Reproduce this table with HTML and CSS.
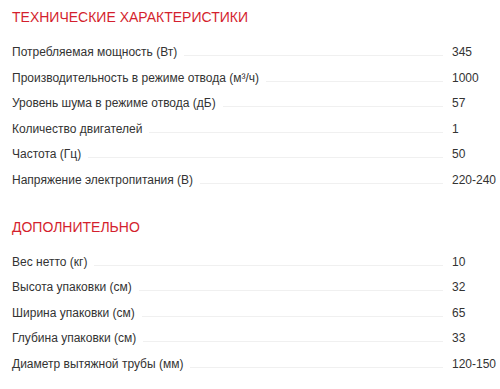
FILE: index.html
```html
<!DOCTYPE html>
<html lang="ru">
<head>
<meta charset="utf-8">
<link rel="stylesheet" href="styles.css">
</head>
<body>
<div class="specs">
  <section class="group">
    <h2 class="group-title">ТЕХНИЧЕСКИЕ ХАРАКТЕРИСТИКИ</h2>
    <div class="row"><span class="label">Потребляемая мощность (Вт)</span><span class="fill"></span><span class="value">345</span></div>
    <div class="row"><span class="label">Производительность в режиме отвода (м³/ч)</span><span class="fill"></span><span class="value">1000</span></div>
    <div class="row"><span class="label">Уровень шума в режиме отвода (дБ)</span><span class="fill"></span><span class="value">57</span></div>
    <div class="row"><span class="label">Количество двигателей</span><span class="fill"></span><span class="value">1</span></div>
    <div class="row"><span class="label">Частота (Гц)</span><span class="fill"></span><span class="value">50</span></div>
    <div class="row"><span class="label">Напряжение электропитания (В)</span><span class="fill"></span><span class="value">220-240</span></div>
  </section>
  <section class="group">
    <h2 class="group-title">ДОПОЛНИТЕЛЬНО</h2>
    <div class="row"><span class="label">Вес нетто (кг)</span><span class="fill"></span><span class="value">10</span></div>
    <div class="row"><span class="label">Высота упаковки (см)</span><span class="fill"></span><span class="value">32</span></div>
    <div class="row"><span class="label">Ширина упаковки (см)</span><span class="fill"></span><span class="value">65</span></div>
    <div class="row"><span class="label">Глубина упаковки (см)</span><span class="fill"></span><span class="value">33</span></div>
    <div class="row"><span class="label">Диаметр вытяжной трубы (мм)</span><span class="fill"></span><span class="value">120-150</span></div>
  </section>
</div>
</body>
</html>
```
FILE: styles.css
```css
html, body {
  margin: 0;
  padding: 0;
  background: #ffffff;
}

body {
  font-family: "Liberation Sans", Arial, sans-serif;
  color: #333333;
}

.specs {
  padding: 7px 0 0 12px;
}

.group + .group {
  margin-top: 23px;
}

.group-title {
  margin: 0 0 13px 0;
  font-size: 14px;
  line-height: 20px;
  font-weight: normal;
  color: #d41f2e;
}

.row {
  display: flex;
  align-items: baseline;
  font-size: 12px;
  line-height: 15.6px;
  padding: 5px 0;
}

.label {
  flex: none;
  white-space: nowrap;
}

.fill {
  flex: 1;
  border-bottom: 1px solid #f0f0f0;
  margin: 0 9px 0 7px;
}

.value {
  flex: none;
  width: 48px;
  white-space: nowrap;
}
```
